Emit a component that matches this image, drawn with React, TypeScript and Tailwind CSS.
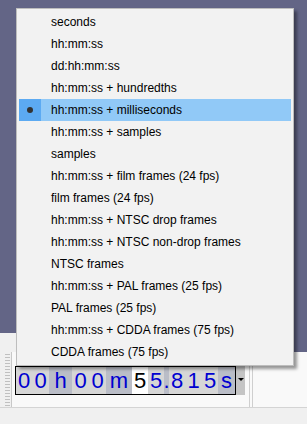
import React from 'react';

const items = [
  'seconds',
  'hh:mm:ss',
  'dd:hh:mm:ss',
  'hh:mm:ss + hundredths',
  'hh:mm:ss + milliseconds',
  'hh:mm:ss + samples',
  'samples',
  'hh:mm:ss + film frames (24 fps)',
  'film frames (24 fps)',
  'hh:mm:ss + NTSC drop frames',
  'hh:mm:ss + NTSC non-drop frames',
  'NTSC frames',
  'hh:mm:ss + PAL frames (25 fps)',
  'PAL frames (25 fps)',
  'hh:mm:ss + CDDA frames (75 fps)',
  'CDDA frames (75 fps)',
];

const selected = 4;

// kind: d = digit, l = label, f = focused digit
const cells: { t: string; w: string; k: 'd' | 'l' | 'f' }[] = [
  { t: '0', w: 'w-[16px]', k: 'd' },
  { t: '0', w: 'w-[17px]', k: 'd' },
  { t: 'h', w: 'w-[23px]', k: 'l' },
  { t: '0', w: 'w-[17px]', k: 'd' },
  { t: '0', w: 'w-[17px]', k: 'd' },
  { t: 'm', w: 'w-[26px]', k: 'l' },
  { t: '5', w: 'w-[16px]', k: 'f' },
  { t: '5', w: 'w-[16px]', k: 'd' },
  { t: '.', w: 'w-[5px]', k: 'l' },
  { t: '8', w: 'w-[16px]', k: 'd' },
  { t: '1', w: 'w-[17px]', k: 'd' },
  { t: '5', w: 'w-[16px]', k: 'd' },
  { t: 's', w: 'w-[17px]', k: 'l' },
];

const cellBg = {
  d: 'bg-[#d6d6d6] text-[#0000d0]',
  l: 'bg-[#babdc7] text-[#0000d0]',
  f: 'bg-white text-black',
};

const TimeControl = () => (
  <div className="flex">
    <div className="flex h-[29px] border border-black">
      {cells.map((c, i) => (
        <div
          key={i}
          className={`${c.w} ${cellBg[c.k]} flex items-center justify-center text-[22px] leading-none`}
        >
          {c.t}
        </div>
      ))}
    </div>
    <div className="w-[9px] h-[29px] bg-[#c4c4c4] flex justify-center pt-[12px]">
      <div className="w-0 h-0 border-l-[3px] border-r-[3px] border-t-[3px] border-l-transparent border-r-transparent border-t-black" />
    </div>
  </div>
);

const Grip = () => (
  <div className="w-[12px] h-full flex border-r border-[#c8c8c8] bg-[#f0f0f0]">
    <div className="ml-[5px] mt-[2px] flex flex-col gap-[2px]">
      {Array.from({ length: 18 }).map((_, i) => (
        <div key={i} className="w-[5px] h-px bg-[#c0c0c0]" />
      ))}
    </div>
  </div>
);

const FormatMenu = () => (
  <div className="absolute left-[16px] top-[8px] w-[278px] h-[358px] bg-[#f2f2f2] border border-[#bdbdbd] shadow-[3px_3px_3px_rgba(0,0,0,0.4)] py-[2px] px-[2px]">
    {items.map((label, i) => {
      const on = i === selected;
      return (
        <div key={label} className={`flex h-[22px] items-center ${on ? 'bg-[#91c9f7]' : ''}`}>
          <div className={`w-[22px] h-full flex items-center justify-center ${on ? 'bg-[#5caaf2]' : ''}`}>
            {on && <div className="w-[6px] h-[6px] rounded-full bg-[#333333]" />}
          </div>
          <span className="pl-[10px] text-[12px] text-black">{label}</span>
        </div>
      );
    })}
  </div>
);

export default function App() {
  return (
    <div
      className="relative w-[307px] h-[424px] bg-[#636586] overflow-hidden flex flex-col"
      style={{ fontFamily: '"Liberation Sans", Arial, sans-serif' }}
    >
      <div className="h-[333px]" />
      <div className="h-[19px] flex">
        <div className="w-[294px] bg-[#f0f0f0]" />
      </div>
      <div className="h-[56px] flex bg-[#f9f9f9] border-b border-[#d4d4d4]">
        <Grip />
        <div className="pl-[3px] pt-[14px]">
          <TimeControl />
        </div>
        <div className="ml-[4px] w-px h-full bg-[#cfcfcf]" />
        <div className="ml-[2px] w-px h-full bg-[#cfcfcf]" />
      </div>
      <div className="flex-1 bg-[#f0f0f0]" />
      <FormatMenu />
    </div>
  );
}
